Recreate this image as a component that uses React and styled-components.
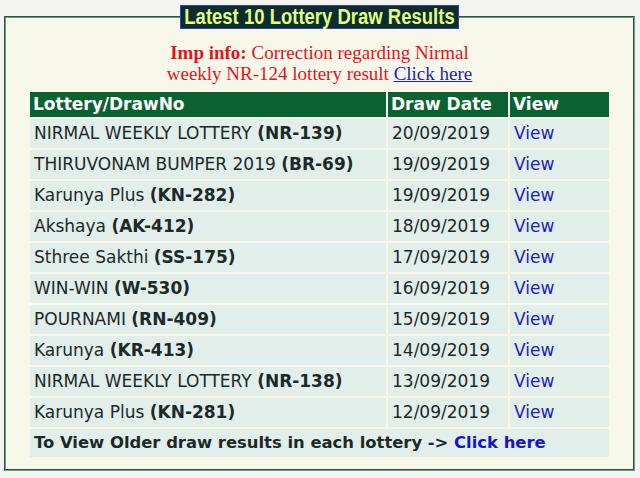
import React from 'react';
import styled, { createGlobalStyle } from 'styled-components';

const GlobalStyle = createGlobalStyle`
  body {
    margin: 0;
    background: #f3f4f1;
    font-family: "DejaVu Sans", Verdana, sans-serif;
  }
`;

const Box = styled.fieldset`
  margin: 5px 5px 0 4px;
  padding: 0 0 10px;
  width: 631px;
  box-sizing: border-box;
  background: #f7f8ea;
  border: 2px groove #62a585;
`;

const Title = styled.legend`
  margin: 0 auto;
  padding: 0 3px;
  height: 24px;
  box-sizing: border-box;
  background: #0c2c2e;
  border: 1px solid #3340c8;
  color: #e2ff82;
  font-family: "Liberation Sans", Arial, sans-serif;
  font-weight: bold;
  font-size: 18.5px;
  line-height: 22px;
  white-space: nowrap;

  span {
    display: inline-block;
    transform: scaleY(1.18);
  }
`;

const Notice = styled.p`
  margin: 13px 0 6px;
  text-align: center;
  color: #e0141e;
  font-family: "Liberation Serif", "Times New Roman", serif;
  font-size: 19px;
  line-height: 21px;

  b { font-weight: bold; }
  a { color: #1c1ccf; text-decoration: underline; }
`;

const Table = styled.table`
  width: 583px;
  margin: 0 auto;
  border-collapse: separate;
  border-spacing: 2px;
  font-size: 17px;
  color: #1b2a29;
`;

const Head = styled.th`
  background: #0b6231;
  color: #ffffff;
  font-weight: bold;
  text-align: left;
  padding: 2px 3px;
  height: 21px;
  line-height: 21px;
  width: ${p => p.$w || 'auto'};
`;

const Cell = styled.td`
  background: #e2eee9;
  padding: 5px 4px;
  height: 19px;
  line-height: 19px;
  white-space: nowrap;

  a { color: #1c1cc4; text-decoration: none; }
`;

const Footer = styled.td`
  background: #e2eee9;
  padding: 5px 4px;
  height: 18px;
  line-height: 18px;
  font-weight: bold;
  font-size: 16.4px;

  a { color: #1414cc; text-decoration: none; }
`;

const draws = [
  { name: 'NIRMAL WEEKLY LOTTERY', code: 'NR-139', date: '20/09/2019' },
  { name: 'THIRUVONAM BUMPER 2019', code: 'BR-69', date: '19/09/2019' },
  { name: 'Karunya Plus', code: 'KN-282', date: '19/09/2019' },
  { name: 'Akshaya', code: 'AK-412', date: '18/09/2019' },
  { name: 'Sthree Sakthi', code: 'SS-175', date: '17/09/2019' },
  { name: 'WIN-WIN', code: 'W-530', date: '16/09/2019' },
  { name: 'POURNAMI', code: 'RN-409', date: '15/09/2019' },
  { name: 'Karunya', code: 'KR-413', date: '14/09/2019' },
  { name: 'NIRMAL WEEKLY LOTTERY', code: 'NR-138', date: '13/09/2019' },
  { name: 'Karunya Plus', code: 'KN-281', date: '12/09/2019' },
];

export default function App() {
  return (
    <>
      <GlobalStyle />
      <Box>
        <Title><span>Latest 10 Lottery Draw Results</span></Title>
        <Notice>
          <b>Imp info:</b> Correction regarding Nirmal<br />
          weekly NR-124 lottery result <a href="#">Click here</a>
        </Notice>
        <Table>
          <thead>
            <tr>
              <Head $w="350px">Lottery/DrawNo</Head>
              <Head $w="114px">Draw Date</Head>
              <Head>View</Head>
            </tr>
          </thead>
          <tbody>
            {draws.map((d) => (
              <tr key={d.code}>
                <Cell>{d.name} <b>({d.code})</b></Cell>
                <Cell>{d.date}</Cell>
                <Cell><a href="#">View</a></Cell>
              </tr>
            ))}
            <tr>
              <Footer colSpan={3}>
                To View Older draw results in each lottery -&gt; <a href="#">Click here</a>
              </Footer>
            </tr>
          </tbody>
        </Table>
      </Box>
    </>
  );
}
